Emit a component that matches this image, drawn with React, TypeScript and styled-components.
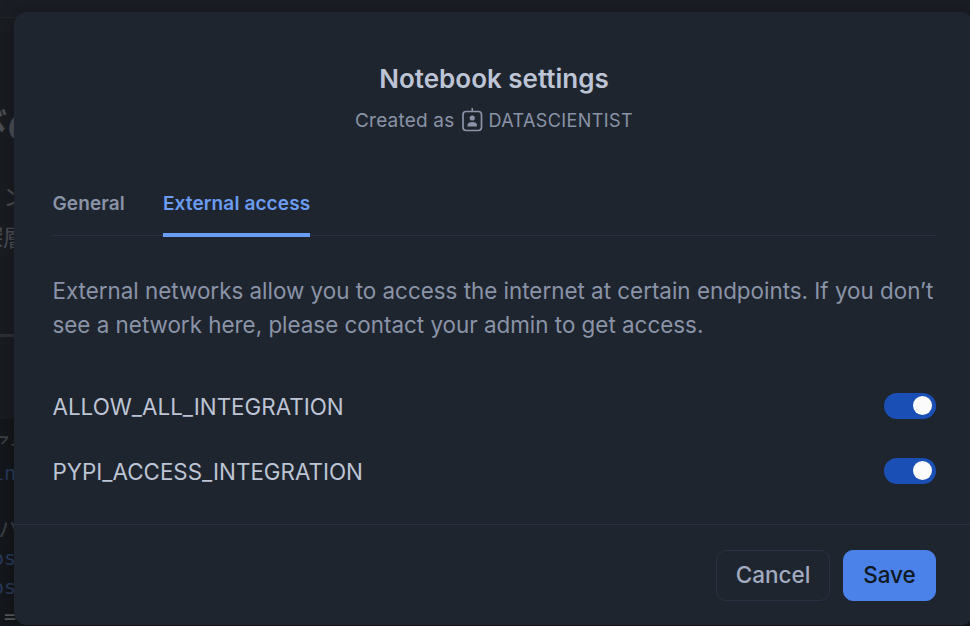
import React, { useState } from "react";
import styled, { createGlobalStyle } from "styled-components";

const GlobalStyle = createGlobalStyle`
  *, *::before, *::after { box-sizing: border-box; }
  html, body, #root { height: 100%; margin: 0; }
  body {
    overflow: hidden;
    background: #191c21;
    font-family: Inter, "Noto Sans CJK JP", sans-serif;
    -webkit-font-smoothing: antialiased;
  }
  button { font-family: inherit; cursor: pointer; }
`;

const Screen = styled.div`
  position: relative;
  height: 626px;
  width: 970px;
  overflow: hidden;
`;

const Page = styled.div`
  height: 626px;
  width: 970px;
  overflow: hidden;
  white-space: nowrap;
  color: #4a4d53;
`;

const PageBar = styled.div`
  height: 18px;
  background: #1a1e24;
  border-bottom: 1px solid #22262c;
`;

const PageHeading = styled.div`
  height: 56px;
  margin: 81px 0 22px -29px;
  font-size: 36px;
  font-weight: 700;
  line-height: 56px;
`;

const PageText = styled.div<{ $shift: number }>`
  height: 41px;
  margin-left: ${(p) => p.$shift}px;
  font-size: 23px;
  line-height: 41px;
`;

const PageRule = styled.div`
  height: 3px;
  margin: 75px 0 82px;
  background: #2c3138;
`;

const Code = styled.div`
  height: 210px;
  padding-top: 11px;
  background: #14171b;
  font-family: "DejaVu Sans Mono", "Noto Sans CJK JP", monospace;
  font-size: 20px;
`;

const CodeLine = styled.div<{ $shift: number; $tone: string; $gap?: number; $size?: number }>`
  height: 29px;
  margin: 0 0 ${(p) => p.$gap ?? 0}px ${(p) => p.$shift}px;
  font-size: ${(p) => p.$size ?? 20}px;
  line-height: 29px;
  color: ${(p) => p.$tone};
`;

const Modal = styled.section`
  position: absolute;
  top: 12px;
  left: 14px;
  width: 960px;
  height: 613px;
  display: flex;
  flex-direction: column;
  border-radius: 13px;
  background: #1f252e;
  box-shadow: 0 0 18px rgba(0, 0, 0, 0.3);
`;

const Header = styled.header`
  height: 161px;
  padding-top: 50px;
  display: flex;
  flex-direction: column;
  align-items: center;
`;

const Title = styled.h1`
  margin: 0;
  font-size: 26px;
  font-weight: 600;
  line-height: 34px;
  color: #bdc4d5;
`;

const Owner = styled.div`
  display: flex;
  align-items: center;
  height: 24px;
  margin-top: 12px;
  font-size: 19px;
  line-height: 24px;
  letter-spacing: 0.2px;
  color: #8a93a8;
`;

const OwnerText = styled.span`
  padding-top: 1px;
`;

const Role = styled.span`
  display: flex;
  align-items: center;
  gap: 5px;
  margin-left: 8px;
  font-size: 18px;
  letter-spacing: 0.4px;
`;

const TabList = styled.nav`
  display: flex;
  gap: 38px;
  height: 63px;
  margin: 0 38px 0 38.5px;
  border-bottom: 1px solid #2b3142;
`;

const Tab = styled.button<{ $active: boolean }>`
  height: 64px;
  padding: 1px 0 0;
  border: 0;
  border-bottom: 4px solid ${(p) => (p.$active ? "#6b9cf3" : "transparent")};
  background: none;
  font-size: 19px;
  font-weight: 600;
  letter-spacing: 0.12px;
  color: ${(p) => (p.$active ? "#6b9cf3" : "#8a93a8")};
`;

const Body = styled.div`
  height: 288px;
  padding: 38px 38px 0 38.5px;
`;

const Description = styled.p`
  margin: 0;
  font-size: 22.4px;
  line-height: 34px;
  white-space: nowrap;
  color: #8a93a8;
`;

const IntegrationList = styled.div`
  display: flex;
  flex-direction: column;
  margin-top: 31px;
`;

const Integration = styled.div`
  display: flex;
  align-items: center;
  justify-content: space-between;
  height: 65px;
  font-size: 22.4px;
  color: #bdc4d5;
`;

const IntegrationName = styled.span`
  padding-top: 2px;
`;

const Toggle = styled.button<{ $on: boolean }>`
  display: flex;
  justify-content: ${(p) => (p.$on ? "flex-end" : "flex-start")};
  align-items: center;
  width: 52px;
  height: 26px;
  padding: 0 4px;
  border: 0;
  border-radius: 13px;
  background: ${(p) => (p.$on ? "#1a4fb5" : "#3b4354")};
`;

const Knob = styled.span`
  width: 19px;
  height: 19px;
  border-radius: 50%;
  background: #fbfbfb;
`;

const Footer = styled.footer`
  display: flex;
  justify-content: flex-end;
  gap: 13px;
  height: 101px;
  padding: 25px 38px 0;
  border-top: 1px solid #2b3142;
`;

const Button = styled.button<{ $primary?: boolean }>`
  width: ${(p) => (p.$primary ? 93 : 114)}px;
  height: 51px;
  padding: 0 0 2px;
  border: 1px solid ${(p) => (p.$primary ? "#4a82ea" : "#2b3142")};
  border-radius: 10px;
  background: ${(p) => (p.$primary ? "#4a82ea" : "transparent")};
  font-size: 22.5px;
  font-weight: 500;
  color: ${(p) => (p.$primary ? "#111820" : "#a2abc0")};
`;

const BadgeIcon = () => (
  <svg width="21" height="24" viewBox="0 0 21 24" fill="none">
    <rect x="1" y="3.5" width="18.5" height="19" rx="3.2" stroke="#8a93a8" strokeWidth="1.7" />
    <path d="M10.25 0V3.5" stroke="#8a93a8" strokeWidth="1.6" />
    <circle cx="10.25" cy="10" r="2.6" fill="#8a93a8" />
    <path d="M5.5 18.5V17.2c0-2 1.9-3.1 4.75-3.1S15 15.2 15 17.2V18.5Z" fill="#8a93a8" />
  </svg>
);

const tabs = ["General", "External access"];
const integrations = ["ALLOW_ALL_INTEGRATION", "PYPI_ACCESS_INTEGRATION"];

export default function App() {
  const [tab, setTab] = useState("External access");
  const [enabled, setEnabled] = useState<Record<string, boolean>>({
    ALLOW_ALL_INTEGRATION: true,
    PYPI_ACCESS_INTEGRATION: true,
  });

  return (
    <Screen>
      <GlobalStyle />
      <Page aria-hidden>
        <PageBar />
        <PageHeading>びの</PageHeading>
        <PageText $shift={3}>ン</PageText>
        <PageText $shift={-20}>深層</PageText>
        <PageRule />
        <Code>
          <CodeLine $shift={-12} $tone="#3c4046" $size={22}>アイ</CodeLine>
          <CodeLine $shift={-8} $tone="#293a5c" $gap={27}>in</CodeLine>
          <CodeLine $shift={-2} $tone="#3c4046" $size={22}>ハ</CodeLine>
          <CodeLine $shift={-8} $tone="#293a5c">os</CodeLine>
          <CodeLine $shift={-8} $tone="#293a5c">os</CodeLine>
          <CodeLine $shift={4} $tone="#55585c">=</CodeLine>
        </Code>
      </Page>
      <Modal role="dialog" aria-label="Notebook settings">
        <Header>
          <Title>Notebook settings</Title>
          <Owner>
            <OwnerText>Created as</OwnerText>
            <Role>
              <BadgeIcon />
              <OwnerText>DATASCIENTIST</OwnerText>
            </Role>
          </Owner>
        </Header>
        <TabList>
          {tabs.map((name) => (
            <Tab key={name} $active={name === tab} onClick={() => setTab(name)}>
              {name}
            </Tab>
          ))}
        </TabList>
        <Body>
          <Description>
            External networks allow you to access the internet at certain endpoints. If you don’t
            <br />
            see a network here, please contact your admin to get access.
          </Description>
          <IntegrationList>
            {integrations.map((name) => (
              <Integration key={name}>
                <IntegrationName>{name}</IntegrationName>
                <Toggle
                  role="switch"
                  aria-checked={enabled[name]}
                  aria-label={name}
                  $on={enabled[name]}
                  onClick={() => setEnabled({ ...enabled, [name]: !enabled[name] })}
                >
                  <Knob />
                </Toggle>
              </Integration>
            ))}
          </IntegrationList>
        </Body>
        <Footer>
          <Button>Cancel</Button>
          <Button $primary>Save</Button>
        </Footer>
      </Modal>
    </Screen>
  );
}
